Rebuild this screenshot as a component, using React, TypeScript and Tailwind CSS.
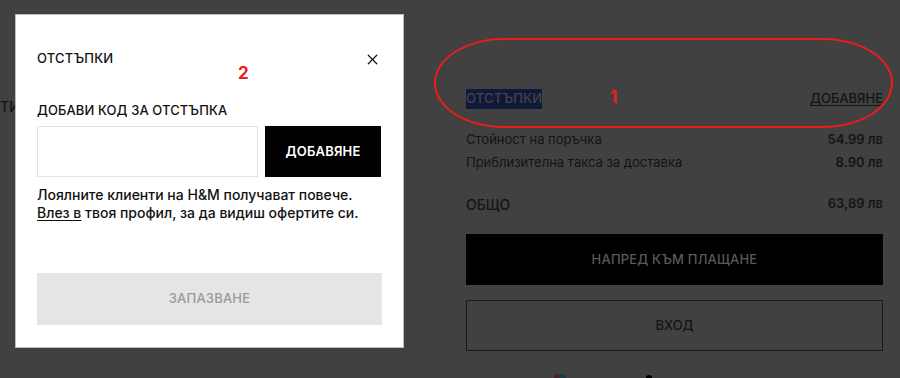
import { X } from 'lucide-react'

const font = { fontFamily: '"Inter", "Noto Sans", sans-serif' }

function SummaryRow({ label, value, bold }: { label: string; value: string; bold?: boolean }) {
  return (
    <div className="flex items-center justify-between h-[23px] text-[13px] text-[#141414]">
      <span>{label}</span>
      <span className={bold ? 'font-semibold' : ''}>{value}</span>
    </div>
  )
}

export default function App() {
  return (
    <div className="relative w-[900px] h-[378px] overflow-hidden bg-[#414141]" style={font}>
      {/* dimmed page behind the dialog */}
      <div className="flex h-full">
        <div className="w-[466px] shrink-0 pt-[94px]">
          <span className="whitespace-nowrap text-[14px] font-medium text-[#141414]">ТИ</span>
        </div>
        <div className="w-[417px] shrink-0 pt-[90px]">
          <div className="flex items-center justify-between h-[18px] text-[13px]">
            <span className="bg-[#0f1a3b] text-[#454545] font-medium tracking-[0.2px]">ОТСТЪПКИ</span>
            <span className="underline underline-offset-2 text-[#141414] font-medium">ДОБАВЯНЕ</span>
          </div>
          <div className="mt-[20px]">
            <SummaryRow label="Стойност на поръчка" value="54.99 лв" bold />
            <SummaryRow label="Приблизителна такса за доставка" value="8.90 лв" bold />
          </div>
          <div className="mt-[21px] flex items-center justify-between h-[18px] text-[14px] text-[#141414]">
            <span className="font-medium">ОБЩО</span>
            <span className="font-semibold text-[13px]">63,89 лв</span>
          </div>
          <div className="mt-[21px] h-[51px] bg-black flex items-center justify-center text-[13px] font-medium text-[#5a5a5a] tracking-[0.2px]">
            НАПРЕД КЪМ ПЛАЩАНЕ
          </div>
          <div className="mt-[15px] h-[51px] border border-[#1a1a1a] flex items-center justify-center text-[13px] font-medium text-[#141414]">
            ВХОД
          </div>
          <div className="mt-[23px] ml-[88px] flex items-center gap-[80px]">
            <span className="flex">
              <span className="w-[7px] h-[7px] rounded-full bg-[#5a1a24]" />
              <span className="w-[7px] h-[7px] rounded-full bg-[#1a3a4a] -ml-[2px]" />
            </span>
            <span className="w-[6px] h-[6px] rounded-full bg-black" />
          </div>
        </div>
      </div>

      {/* annotation 1 */}
      <div className="absolute left-[434px] top-[38px] w-[459px] h-[90px] rounded-[70px/45px] border-2 border-[#f01b1b]" />
      <span className="absolute left-[610px] top-[85px] text-[17px] font-bold text-[#f01b1b]">1</span>

      {/* dialog */}
      <div className="absolute left-[15px] top-[14px] w-[389px] h-[334px] bg-white border border-[#bdbdbd] px-[21px] text-[#111]">
        <div className="flex items-center justify-between mt-[35px] h-[18px]">
          <span className="text-[13px] font-medium tracking-[0.2px]">ОТСТЪПКИ</span>
          <X className="w-[17px] h-[17px] mr-[1px]" strokeWidth={1.7} />
        </div>
        <span className="absolute left-[222px] top-[46px] text-[17px] font-bold text-[#f01b1b]">2</span>
        <div className="mt-[34px] h-[18px] flex items-center text-[13px] font-medium tracking-[0.1px]">
          ДОБАВИ КОД ЗА ОТСТЪПКА
        </div>
        <div className="mt-[6px] flex gap-[7px]">
          <div className="w-[221px] h-[51px] border border-[#e3e3e3]" />
          <div className="w-[116px] h-[51px] bg-black text-white flex items-center justify-center text-[13px] font-semibold tracking-[0.2px]">
            ДОБАВЯНЕ
          </div>
        </div>
        <p className="mt-[9px] text-[14px] leading-[18px] font-medium">
          Лоялните клиенти на H&amp;M получават повече.
          <br />
          <span className="underline underline-offset-2">Влез в</span> твоя профил, за да видиш офертите си.
        </p>
        <div className="mt-[51px] h-[52px] bg-[#e5e5e5] flex items-center justify-center text-[13px] font-medium text-[#9a9a9a] tracking-[0.2px]">
          ЗАПАЗВАНЕ
        </div>
      </div>
    </div>
  )
}
